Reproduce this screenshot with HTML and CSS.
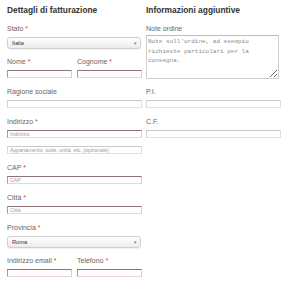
FILE: index.html
```html
<!DOCTYPE html>
<html lang="it">
<head>
    <meta charset="UTF-8">
    <meta name="viewport" content="width=device-width, initial-scale=1.0">
    <title>Checkout</title>
    <link rel="stylesheet" href="styles.css">
</head>
<body>
    <form class="checkout">
        <div class="col">
            <h3>Dettagli di fatturazione</h3>
            <div class="field field-select">
                <label for="billing_country">Stato <abbr class="required" title="obbligatorio">*</abbr></label>
                <div class="select-wrap">
                    <select id="billing_country" name="billing_country">
                        <option>Italia</option>
                    </select>
                    <span class="arrow">▾</span>
                </div>
            </div>
            <div class="row-half">
                <div class="field">
                    <label for="billing_first_name">Nome <abbr class="required" title="obbligatorio">*</abbr></label>
                    <input type="text" id="billing_first_name" class="req">
                </div>
                <div class="field">
                    <label for="billing_last_name">Cognome <abbr class="required" title="obbligatorio">*</abbr></label>
                    <input type="text" id="billing_last_name" class="req">
                </div>
            </div>
            <div class="field">
                <label for="billing_company">Ragione sociale</label>
                <input type="text" id="billing_company">
            </div>
            <div class="field">
                <label for="billing_address_1">Indirizzo <abbr class="required" title="obbligatorio">*</abbr></label>
                <input type="text" id="billing_address_1" class="req" placeholder="Indirizzo">
                <input type="text" id="billing_address_2" class="second" placeholder="Appartamento, suite, unità, etc. (opzionale)">
            </div>
            <div class="field">
                <label for="billing_postcode">CAP <abbr class="required" title="obbligatorio">*</abbr></label>
                <input type="text" id="billing_postcode" class="req" placeholder="CAP">
            </div>
            <div class="field">
                <label for="billing_city">Città <abbr class="required" title="obbligatorio">*</abbr></label>
                <input type="text" id="billing_city" class="req" placeholder="Città">
            </div>
            <div class="field field-select">
                <label for="billing_state">Provincia <abbr class="required" title="obbligatorio">*</abbr></label>
                <div class="select-wrap">
                    <select id="billing_state" name="billing_state" class="big">
                        <option>Roma</option>
                    </select>
                    <span class="arrow">▾</span>
                </div>
            </div>
            <div class="row-half">
                <div class="field">
                    <label for="billing_email">Indirizzo email <abbr class="required" title="obbligatorio">*</abbr></label>
                    <input type="email" id="billing_email" class="req">
                </div>
                <div class="field">
                    <label for="billing_phone">Telefono <abbr class="required" title="obbligatorio">*</abbr></label>
                    <input type="tel" id="billing_phone" class="req">
                </div>
            </div>
        </div>

        <div class="col">
            <h3>Informazioni aggiuntive</h3>
            <div class="field field-notes">
                <label for="order_comments">Note ordine</label>
                <textarea id="order_comments" placeholder="Note sull'ordine, ad esempio richieste particolari per la consegna."></textarea>
            </div>
            <div class="field">
                <label for="billing_pi">P.I.</label>
                <input type="text" id="billing_pi">
            </div>
            <div class="field">
                <label for="billing_cf">C.F.</label>
                <input type="text" id="billing_cf">
            </div>
        </div>
    </form>
</body>
</html>
```

FILE: styles.css
```css
body {
    font-family: 'Liberation Sans', Arial, sans-serif;
    background-color: #fff;
    color: #333;
    margin: 0;
    padding: 5px 0 0 7px;
}
.checkout {
    display: grid;
    grid-template-columns: 135px 135px;
    column-gap: 4px;
    align-items: start;
}
h3 {
    font-size: 8.4px;
    line-height: 10px;
    font-weight: bold;
    color: #333;
    margin: 0 0 9px;
}
.field {
    margin-bottom: 9px;
}
.field-select {
    margin-bottom: 8px;
}
.field label {
    display: block;
    font-size: 7px;
    line-height: 9px;
    color: #666;
    margin-bottom: 4px;
    white-space: nowrap;
}
.required {
    color: #e3403a;
    text-decoration: none;
    border: none;
}
.row-half {
    display: grid;
    grid-template-columns: 1fr 1fr;
    column-gap: 5px;
}
.row-half .field {
    margin-bottom: 9px;
}
input {
    display: block;
    box-sizing: border-box;
    width: 100%;
    height: 8px;
    margin: 0;
    padding: 0 2px;
    border: 1px solid;
    border-color: #c9c9c9 #dedede #e2e2e2 #d6d6d6;
    background-color: #fff;
    font-family: 'Liberation Sans', Arial, sans-serif;
    font-size: 5.2px;
    color: #333;
    outline: none;
}
input.req {
    border-color: #8c7474 #e6c6c6 #efd6d6 #b29696;
}
input.second {
    margin-top: 8px;
}
input::placeholder {
    color: #9a9a9a;
}
.select-wrap {
    position: relative;
}
select {
    display: block;
    box-sizing: border-box;
    width: 134px;
    height: 12px;
    margin: 0;
    padding: 0 4px;
    border: 1px solid #cfcfcf;
    border-radius: 3px;
    background: linear-gradient(#fefefe, #ececec);
    box-shadow: 0 1px 1px rgba(0, 0, 0, 0.06);
    appearance: none;
    -webkit-appearance: none;
    font-family: 'Liberation Sans', Arial, sans-serif;
    font-size: 5.7px;
    color: #333;
    outline: none;
}
.arrow {
    position: absolute;
    right: 5px;
    top: 2px;
    font-size: 5px;
    line-height: 8px;
    color: #888;
    pointer-events: none;
}
.field-notes label {
    margin-bottom: 2px;
}
.field-notes {
    margin-bottom: 8px;
}
textarea {
    display: block;
    box-sizing: border-box;
    width: 133px;
    height: 44px;
    margin: 0;
    padding: 1px 1px;
    border: 1px solid #cfcfcf;
    border-top-color: #bdbdbd;
    font-family: 'Liberation Mono', 'Courier New', monospace;
    font-size: 6px;
    line-height: 9.5px;
    color: #333;
    outline: none;
}
textarea::placeholder {
    color: #8a8a8a;
}
```
